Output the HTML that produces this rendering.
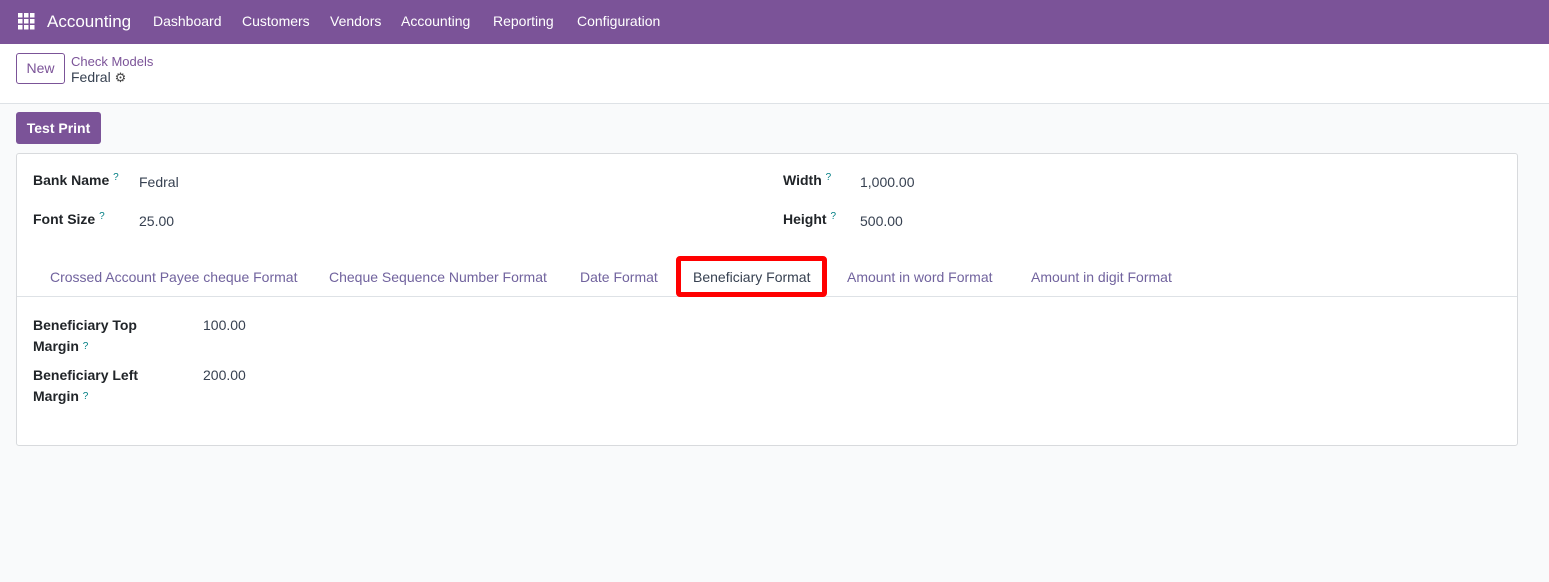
<!DOCTYPE html>
<html><head><style>
body{margin:0;width:1549px;height:582px;background:#f9fafb;font-family:"Liberation Sans","DejaVu Sans",sans-serif;font-size:14px;color:#374151;position:relative;overflow:hidden}
.a{position:absolute;white-space:nowrap}
.nav{position:absolute;left:0;top:0;width:1549px;height:44px;background:#7b5398}
.nav span{position:absolute;top:13px;color:#fff;font-size:14px}
.cp{position:absolute;left:0;top:44px;width:1549px;height:59px;background:#fff;border-bottom:1px solid #dee2e6}
.sheet{position:absolute;left:16px;top:153px;width:1500px;height:291px;background:#fff;border:1px solid #d8dadd;border-radius:3px}
b{font-weight:bold;color:#212529}
.q{color:#017e84;font-size:10px;vertical-align:top}
.tab{position:absolute;top:269px;color:#71639e}
</style></head><body>
<div class="nav">
<svg style="position:absolute;left:18px;top:13px" width="17" height="17"><g fill="#fff"><rect x="0" y="0" width="4.5" height="4.5"/><rect x="6" y="0" width="4.5" height="4.5"/><rect x="12" y="0" width="4.5" height="4.5"/><rect x="0" y="6" width="4.5" height="4.5"/><rect x="6" y="6" width="4.5" height="4.5"/><rect x="12" y="6" width="4.5" height="4.5"/><rect x="0" y="12" width="4.5" height="4.5"/><rect x="6" y="12" width="4.5" height="4.5"/><rect x="12" y="12" width="4.5" height="4.5"/></g></svg>
<span style="left:47px;top:12px;font-size:17px">Accounting</span>
<span style="left:153px">Dashboard</span><span style="left:242px">Customers</span><span style="left:330px">Vendors</span><span style="left:401px">Accounting</span><span style="left:493px">Reporting</span><span style="left:577px">Configuration</span>
</div>
<div class="cp">
<div class="a" style="left:16px;top:9px;width:49px;height:31px;border:1px solid #7b5398;border-radius:3px;box-sizing:border-box;color:#7b5398;text-align:center;line-height:29px">New</div>
<div class="a" style="left:71px;top:10px;color:#7b5398;font-size:13px">Check Models</div>
<div class="a" style="left:71px;top:25px;font-size:14px;color:#374151">Fedral <span style="font-size:13px;color:#444">⚙</span></div>
</div>
<div class="a" style="left:16px;top:112px;width:85px;height:32px;background:#7b5398;border-radius:3px;color:#fff;text-align:center;line-height:32px;font-weight:bold">Test Print</div>
<div class="sheet"></div>
<div class="a" style="left:33px;top:172px"><b>Bank Name</b> <span class="q">?</span></div>
<div class="a" style="left:139px;top:174px">Fedral</div>
<div class="a" style="left:33px;top:211px"><b>Font Size</b> <span class="q">?</span></div>
<div class="a" style="left:139px;top:213px">25.00</div>
<div class="a" style="left:783px;top:172px"><b>Width</b> <span class="q">?</span></div>
<div class="a" style="left:860px;top:174px">1,000.00</div>
<div class="a" style="left:783px;top:211px"><b>Height</b> <span class="q">?</span></div>
<div class="a" style="left:860px;top:213px">500.00</div>
<div class="a" style="left:17px;top:296px;width:1500px;border-top:1px solid #dee2e6"></div>
<div class="tab" style="left:50px">Crossed Account Payee cheque Format</div>
<div class="tab" style="left:329px">Cheque Sequence Number Format</div>
<div class="tab" style="left:580px">Date Format</div>
<div class="a" style="left:676px;top:256px;width:151px;height:41px;border:5px solid #f00;border-radius:4px;box-sizing:border-box;background:#fff"></div>
<div class="tab" style="left:693px;color:#374151">Beneficiary Format</div>
<div class="tab" style="left:847px">Amount in word Format</div>
<div class="tab" style="left:1031px">Amount in digit Format</div>
<div class="a" style="left:33px;top:315px;line-height:21px"><b>Beneficiary Top<br>Margin</b> <span class="q">?</span></div>
<div class="a" style="left:203px;top:317px">100.00</div>
<div class="a" style="left:33px;top:365px;line-height:21px"><b>Beneficiary Left<br>Margin</b> <span class="q">?</span></div>
<div class="a" style="left:203px;top:367px">200.00</div>
</body></html>
